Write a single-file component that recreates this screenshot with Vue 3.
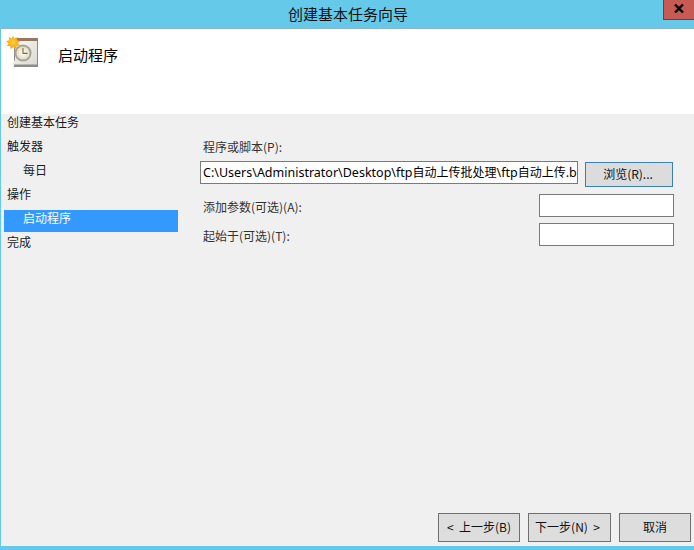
<script setup>
const steps = [
  { label: '创建基本任务', level: 0 },
  { label: '触发器', level: 0 },
  { label: '每日', level: 1 },
  { label: '操作', level: 0 },
  { label: '启动程序', level: 1, active: true },
  { label: '完成', level: 0 },
]
const pathParts = [
  { text: 'C:\\Users\\Administrator\\Desktop\\ftp', cjk: false },
  { text: '自动上传批处理', cjk: true },
  { text: '\\ftp', cjk: false },
  { text: '自动上传', cjk: true },
  { text: '.b', cjk: false },
]
</script>

<template>
  <div class="window">
    <header class="titlebar">
      <span class="title">创建基本任务向导</span>
      <button class="close" aria-label="关闭">
        <svg width="10" height="9" viewBox="0 0 10 9"><path d="M1 0.5 L9 8.5 M9 0.5 L1 8.5" stroke="#000" stroke-width="2.4" fill="none" /></svg>
      </button>
    </header>
    <div class="client">
      <section class="banner">
        <svg class="icon" width="34" height="34" viewBox="0 0 34 34">
          <defs>
            <linearGradient id="page" x1="0" y1="0" x2="1" y2="1"><stop offset="0" stop-color="#fbfaf4" /><stop offset="1" stop-color="#dcd9ce" /></linearGradient>
            <radialGradient id="face" cx="0.5" cy="0.5" r="0.5"><stop offset="0" stop-color="#fffdf6" /><stop offset="1" stop-color="#e6dcc0" /></radialGradient>
            <radialGradient id="sun" cx="0.5" cy="0.5" r="0.5"><stop offset="0" stop-color="#ffd23c" /><stop offset="1" stop-color="#f99c06" /></radialGradient>
          </defs>
          <path d="M9 6 H33 V32 H9 Z" fill="#8b8b8b" />
          <path d="M10 5 H32 V29.5 H7 L10 25 Z" fill="url(#page)" />
          <rect x="10" y="3" width="23" height="3" fill="#9c7561" />
          <circle cx="18" cy="18" r="8.6" fill="#a3a39d" />
          <circle cx="18" cy="18" r="6.6" fill="url(#face)" />
          <path d="M18 13 V18.4 H22.5" stroke="#6f6a5c" stroke-width="1.1" fill="none" />
          <path d="M8 0.5 L9.3 3.4 L12.5 1.9 L12 5.2 L15.2 6 L12.8 8 L15 10.6 L11.6 10.8 L11.3 14 L8.4 12 L5.8 14.2 L5.2 11 L2 11 L3.6 8.2 L1 6.2 L4.2 5.2 L3.8 1.9 L7 3.4 Z" fill="url(#sun)" />
        </svg>
        <h1 class="banner-title">启动程序</h1>
      </section>
      <div class="body">
        <main class="content">
          <nav class="steps">
            <div
              v-for="s in steps"
              :key="s.label"
              class="step"
              :class="{ sub: s.level === 1, active: s.active }"
            >{{ s.label }}</div>
          </nav>
          <form class="form" @submit.prevent>
            <label class="caption">程序或脚本(P):</label>
            <div class="program-row">
              <div class="field program">
                <div class="program-text">
                  <span v-for="(p, i) in pathParts" :key="i" :class="{ cjk: p.cjk }">{{ p.text }}</span>
                </div>
              </div>
              <button class="btn browse" type="button">浏览(R)...</button>
            </div>
            <div class="arg-row first">
              <label>添加参数(可选)(A):</label>
              <input class="field small" type="text" />
            </div>
            <div class="arg-row">
              <label>起始于(可选)(T):</label>
              <input class="field small" type="text" />
            </div>
          </form>
        </main>
        <footer class="actions">
          <button class="btn back" type="button">&lt;&nbsp; 上一步(B)</button>
          <button class="btn next" type="button">下一步(N)&nbsp; &gt;</button>
          <button class="btn cancel" type="button">取消</button>
        </footer>
      </div>
    </div>
    <div class="bottom-edge"></div>
  </div>
</template>

<style>
html, body { margin: 0; padding: 0; background: #f0f0f0; overflow: hidden; }
</style>

<style scoped>
.window {
  width: 694px;
  height: 550px;
  display: flex;
  flex-direction: column;
  box-sizing: border-box;
  font-family: "Noto Sans CJK SC", "Noto Sans", sans-serif;
  font-size: 12px;
  color: #1a1a1a;
  background: #f0f0f0;
}
.titlebar {
  position: relative;
  flex: 0 0 28px;
  height: 28px;
  background: #65c9ea;
  display: flex;
  align-items: center;
  justify-content: center;
}
.title { font-size: 15px; color: #111; line-height: 28px; margin-left: 2px; }
.close {
  position: absolute;
  top: 0;
  right: 0;
  width: 31px;
  height: 20px;
  box-sizing: border-box;
  padding: 0 0 3px;
  border: 0;
  border-left: 1px solid #7a3a3a;
  border-bottom: 1px solid #7a3a3a;
  background: #c75a52;
  display: flex;
  align-items: center;
  justify-content: center;
}
.client {
  flex: 1;
  min-height: 0;
  display: flex;
  flex-direction: column;
  border-left: 1px solid #65c9ea;
  border-top: 1px solid #8fb4c9;
}
.banner {
  flex: 0 0 85px;
  background: #fff;
  display: flex;
  align-items: flex-start;
  padding: 6px 0 0 4px;
  box-sizing: border-box;
}
.icon { flex: none; display: block; }
.banner-title {
  margin: 8px 0 0 19px;
  font-size: 15px;
  font-weight: 400;
  line-height: 24px;
  color: #000;
}
.body { flex: 1; min-height: 0; display: flex; flex-direction: column; }
.content { flex: 1; min-height: 0; display: flex; }
.steps { flex: 0 0 174px; margin-left: 3px; }
.step {
  height: 24px;
  line-height: 16px;
  padding-left: 3px;
  color: #1a1a1a;
}
.step.sub { padding-left: 19px; }
.step.active {
  height: 22px;
  line-height: 16px;
  margin-bottom: 2px;
  box-sizing: border-box;
  background: #3399ff;
  color: #fff;
}
.form { flex: 1; padding: 24px 20px 0 22px; min-width: 0; }
.caption { display: block; line-height: 18px; margin: 0 0 5px 3px; color: #333; }
.program-row { display: flex; align-items: flex-start; width: 474px; }
.field {
  display: block;
  box-sizing: border-box;
  height: 23px;
  border: 1px solid #7a7a7a;
  background: #fff;
  font: inherit;
  color: #000;
  padding: 0 2px;
  outline: none;
  border-radius: 0;
}
.program {
  width: 378px;
  flex: none;
  font-size: 12.5px;
  font-family: "Noto Sans", "Noto Sans CJK SC", sans-serif;
}
.program-text {
  white-space: nowrap;
  line-height: 19px;
}
.cjk { font-size: 12px; font-family: "Noto Sans CJK SC", sans-serif; }
.btn {
  box-sizing: border-box;
  border: 1px solid #707070;
  background: #dddddd;
  font: inherit;
  color: #111;
  padding: 0 0 2px;
  border-radius: 0;
}
.browse {
  flex: none;
  width: 88px;
  height: 25px;
  margin: 1px 0 0 7px;
  padding: 0 2px 2px 0;
  border: 1px solid #3c7fb1;
  background: #dcdcdc;
}
.arg-row {
  display: flex;
  align-items: center;
  justify-content: space-between;
  width: 474px;
  margin-top: 6px;
  color: #333;
}
.arg-row.first { margin-top: 7px; }
.arg-row label { padding: 2px 0 0 3px; }
.small { width: 135px; }
.actions {
  flex: 0 0 auto;
  display: flex;
  justify-content: flex-end;
  gap: 8px;
  padding: 0 3px 4px 0;
}
.back { width: 82px; height: 29px; }
.next { width: 83px; height: 29px; padding-right: 4px; }
.cancel { width: 72px; height: 29px; }
.bottom-edge { flex: 0 0 4px; background: #65c9ea; }
</style>
